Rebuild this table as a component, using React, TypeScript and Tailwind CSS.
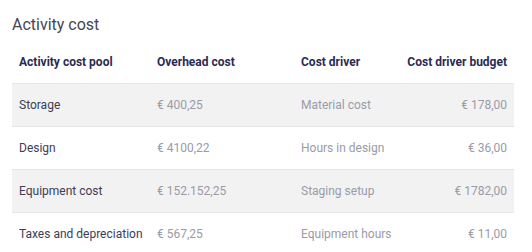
const rows = [
  { pool: "Storage", overhead: "€ 400,25", driver: "Material cost", budget: "€ 178,00" },
  { pool: "Design", overhead: "€ 4100,22", driver: "Hours in design", budget: "€ 36,00" },
  { pool: "Equipment cost", overhead: "€ 152.152,25", driver: "Staging setup", budget: "€ 1782,00" },
  { pool: "Taxes and depreciation", overhead: "€ 567,25", driver: "Equipment hours", budget: "€ 11,00" },
];

export default function App() {
  return (
    <div className="bg-white px-3 pt-[14px] font-['Roboto',sans-serif] w-[532px] h-[252px] overflow-hidden">
      <h2 className="text-[16px] leading-[22px] text-[#454556] font-normal">Activity cost</h2>
      <table className="mt-[5px] w-[502px] table-fixed border-collapse text-[12px] whitespace-nowrap">
        <colgroup>
          <col className="w-[138px]" />
          <col className="w-[144px]" />
          <col className="w-[100px]" />
          <col />
        </colgroup>
        <thead>
          <tr className="h-[42px] border-b border-[#e6e6e6] text-[#2b2b52] font-bold">
            <th className="px-[7px] text-left">Activity cost pool</th>
            <th className="px-[7px] text-left">Overhead cost</th>
            <th className="px-[7px] text-left">Cost driver</th>
            <th className="px-[7px] text-right">Cost driver budget</th>
          </tr>
        </thead>
        <tbody>
          {rows.map((r, i) => (
            <tr key={r.pool} className={`h-[43px] border-b border-[#e6e6e6] ${i % 2 === 0 ? "bg-[#f2f2f2]" : "bg-white"}`}>
              <td className="px-[7px] text-[#3d3d55]">{r.pool}</td>
              <td className="px-[7px] text-[#9a9aa8]">{r.overhead}</td>
              <td className="px-[7px] text-[#9a9aa8]">{r.driver}</td>
              <td className="px-[7px] text-right text-[#9a9aa8]">{r.budget}</td>
            </tr>
          ))}
        </tbody>
      </table>
    </div>
  );
}
